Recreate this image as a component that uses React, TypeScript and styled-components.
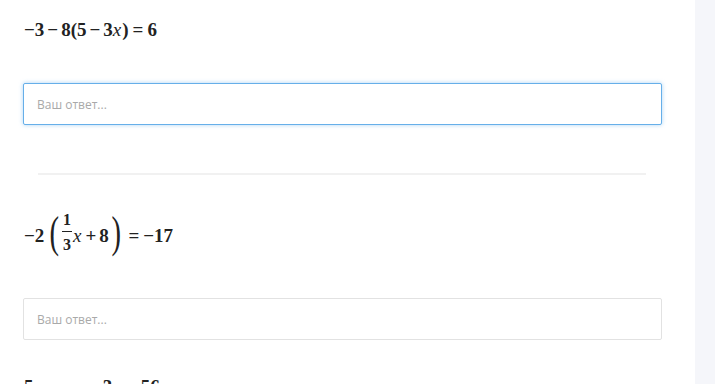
import styled, { createGlobalStyle } from 'styled-components';

const GlobalStyle = createGlobalStyle`
    html, body {
        margin: 0;
        padding: 0;
        background: #ffffff;
        overflow: hidden;
    }
`;

const Page = styled.div`
    display: flex;
    width: 715px;
    height: 384px;
    overflow: hidden;
`;

const Main = styled.main`
    width: 695px;
    flex: none;
    box-sizing: border-box;
    padding: 0 33px 0 23px;
    display: flow-root;
`;

const SidePanel = styled.aside`
    flex: 1;
    background: #f5f6fa;
`;

const Equation = styled.div<{ $height: number; $top: number }>`
    display: flex;
    align-items: center;
    height: ${p => p.$height}px;
    margin-top: ${p => p.$top}px;
    padding-left: 1px;
    font-family: "Liberation Serif", "Times New Roman", serif;
    font-size: 19px;
    font-weight: 700;
    color: #222;
    white-space: nowrap;
`;

const Sym = styled.span`
    line-height: normal;
`;

const Op = styled.span<{ $gap?: number }>`
    line-height: normal;
    margin: 0 ${p => p.$gap ?? 3}px;
`;

const Var = styled.span`
    font-style: italic;
    font-weight: 400;
    line-height: normal;
    margin-right: 1px;
`;

const BigParen = styled.span<{ $side: 'left' | 'right' }>`
    display: inline-block;
    font-size: 44px;
    font-weight: 400;
    line-height: 1;
    transform: translateY(-3px) scaleX(0.65);
    margin: ${p => (p.$side === 'left' ? '0 0 0 3px' : '0 1px 0 0')};
`;

const Fraction = styled.span`
    display: inline-flex;
    flex-direction: column;
    align-items: center;
    margin: 0 1px 6px 0;
    font-size: 16px;
    line-height: 1;
`;

const FracPart = styled.span<{ $pad: string }>`
    padding: ${p => p.$pad};
`;

const FracBar = styled.span`
    align-self: stretch;
    height: 1px;
    background: #222;
`;

const AnswerInput = styled.input<{ $focused?: boolean; $top: number }>`
    display: block;
    width: 100%;
    height: 42px;
    box-sizing: border-box;
    margin: ${p => p.$top}px 0 0;
    padding: 0 13px;
    border: 1px solid ${p => (p.$focused ? '#66afe9' : '#e2e2e2')};
    border-radius: 2px;
    box-shadow: ${p => (p.$focused ? '0 0 4px rgba(102, 175, 233, 0.55)' : 'none')};
    background: #fff;
    font-family: "Open Sans", "Liberation Sans", sans-serif;
    font-size: 12px;
    color: #333;
    outline: none;

    &::placeholder {
        color: #a9a9a9;
    }
`;

const Divider = styled.hr`
    margin: 48px 16px 0 15px;
    height: 2px;
    border: none;
    background: #f1f1f1;
`;

export default function App() {
    return (
        <>
            <GlobalStyle />
            <Page>
                <Main>
                    <Equation $height={41} $top={9}>
                        <Sym>−3</Sym>
                        <Op>−</Op>
                        <Sym>8(5</Sym>
                        <Op>−</Op>
                        <Sym>3</Sym>
                        <Var>x</Var>
                        <Sym>)</Sym>
                        <Op $gap={4}>=</Op>
                        <Sym>6</Sym>
                    </Equation>

                    <AnswerInput $focused $top={33} placeholder="Ваш ответ..." />

                    <Divider />

                    <Equation $height={45} $top={38}>
                        <Sym>−2</Sym>
                        <BigParen $side="left">(</BigParen>
                        <Fraction>
                            <FracPart $pad="0 1px 3px">1</FracPart>
                            <FracBar />
                            <FracPart $pad="5px 1px 0">3</FracPart>
                        </Fraction>
                        <Var>x</Var>
                        <Op>+</Op>
                        <Sym>8</Sym>
                        <BigParen $side="right">)</BigParen>
                        <Op $gap={4}>=</Op>
                        <Sym>−17</Sym>
                    </Equation>

                    <AnswerInput $top={40} placeholder="Ваш ответ..." />

                    <Equation $height={41} $top={26}>
                        <Sym>5</Sym>
                        <Op>−</Op>
                        <Var>x</Var>
                        <Op>−</Op>
                        <Var>x</Var>
                        <Op>−</Op>
                        <Sym>3</Sym>
                        <Var>x</Var>
                        <Op $gap={4}>=</Op>
                        <Sym>56</Sym>
                    </Equation>
                </Main>
                <SidePanel />
            </Page>
        </>
    );
}
